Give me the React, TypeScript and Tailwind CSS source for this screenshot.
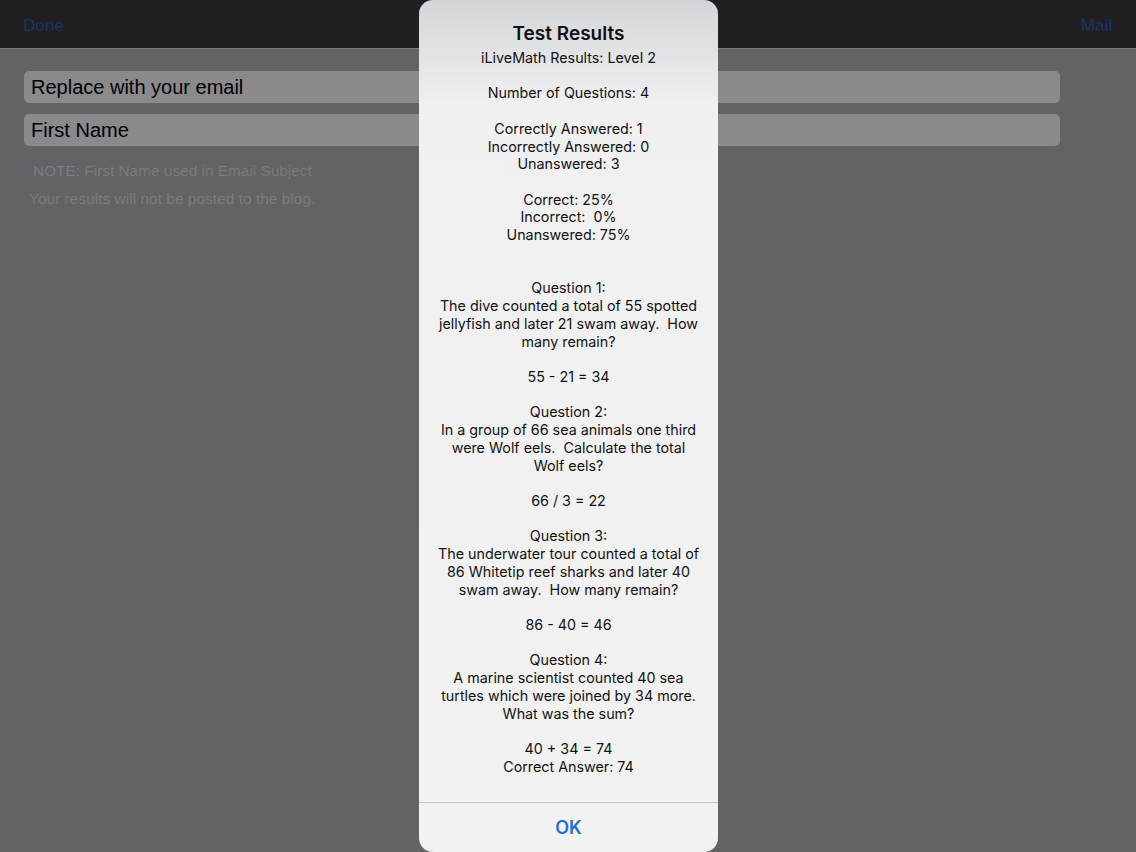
const lines = [
  "iLiveMath Results: Level 2",
  "",
  "Number of Questions: 4",
  "",
  "Correctly Answered: 1",
  "Incorrectly Answered: 0",
  "Unanswered: 3",
  "",
  "Correct: 25%",
  "Incorrect:  0%",
  "Unanswered: 75%",
  "",
  "",
  "Question 1:",
  "The dive counted a total of 55 spotted",
  "jellyfish and later 21 swam away.  How",
  "many remain?",
  "",
  "55 - 21 = 34",
  "",
  "Question 2:",
  "In a group of 66 sea animals one third",
  "were Wolf eels.  Calculate the total",
  "Wolf eels?",
  "",
  "66 / 3 = 22",
  "",
  "Question 3:",
  "The underwater tour counted a total of",
  "86 Whitetip reef sharks and later 40",
  "swam away.  How many remain?",
  "",
  "86 - 40 = 46",
  "",
  "Question 4:",
  "A marine scientist counted 40 sea",
  "turtles which were joined by 34 more.",
  "What was the sum?",
  "",
  "40 + 34 = 74",
  "Correct Answer: 74",
];

function ResultsAlert() {
  return (
    <div className="flex w-[299px] shrink-0 flex-col overflow-hidden rounded-[14px] bg-gradient-to-b from-[#d3d5d8] via-[#f0f0f1] via-[12%] to-[#f2f2f3] font-['Inter',sans-serif] text-[#111]">
      <div className="pt-[22px] text-center text-[19px] leading-[24px] font-semibold">
        Test Results
      </div>
      <div className="mt-[3px] text-center text-[14.3px] leading-[17.72px]">
        {lines.map((line, i) => (
          <div key={i} className="h-[17.72px] whitespace-pre">
            {line}
          </div>
        ))}
      </div>
      <div className="flex-1" />
      <button className="h-[50px] border-t border-[#c6c6ca] text-[18px] font-semibold text-[#1e6fd4]">
        OK
      </button>
    </div>
  );
}

export default function App() {
  return (
    <div className="relative h-[852px] w-[1136px] overflow-hidden bg-[#636265] font-['Liberation_Sans',Arial,sans-serif]">
      <div className="flex h-[49px] items-center justify-between border-b border-[#77767a] bg-[#211f20] pt-[3px] pr-[24px] pl-[23px] text-[17px] text-[#1c3468]">
        <span className="blur-[0.6px]">Done</span>
        <span className="blur-[0.6px]">Mail</span>
      </div>

      <div className="flex flex-col gap-[11px] pt-[22px] pr-[76px] pl-[24px]">
        <div className="flex h-[32px] items-center rounded-[5px] bg-[#8a898c] px-[7px] text-[20px] text-black">
          Replace with your email
        </div>
        <div className="flex h-[32px] items-center rounded-[5px] bg-[#8a898c] px-[7px] text-[20px] text-black">
          First Name
        </div>
      </div>
      <div className="pt-[13px] pl-[33px] text-[15.4px] text-[#7b7a7d]">
        NOTE: First Name used in Email Subject
      </div>
      <div className="pt-[5px] pl-[29px] text-[15.5px] text-[#7b7a7d]">
        Your results will not be posted to the blog.
      </div>

      {/* alert sheet floats over the form */}
      <div className="absolute inset-0 flex justify-center pl-[1px]">
        <ResultsAlert />
      </div>
    </div>
  );
}
